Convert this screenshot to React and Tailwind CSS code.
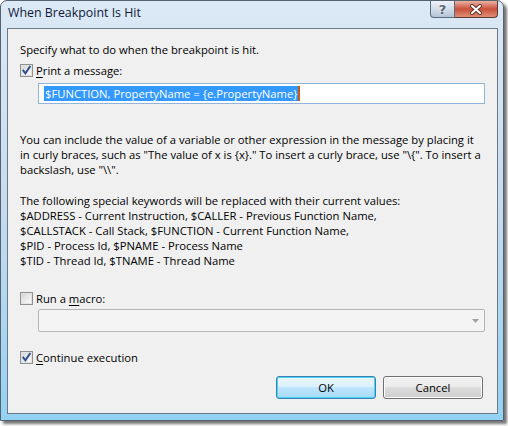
import React from "react";

const font = { fontFamily: '"Open Sans", "Noto Sans", sans-serif' };

function Check({ checked }) {
  return (
    <span className="flex h-[13px] w-[13px] shrink-0 items-center justify-center border border-[#8e8f8f] bg-white">
      <span className="relative flex h-[11px] w-[11px] items-center justify-center border border-[#e2e2e2] bg-gradient-to-br from-[#d8d8d8] to-[#fafafa]">
        {checked && (
          <svg width="9" height="9" viewBox="0 0 9 9" className="overflow-visible">
            <path
              d="M1.3 4.6 L3.4 7.3 L7.8 0.8"
              fill="none"
              stroke="#2c4d8e"
              strokeWidth="1.9"
              strokeLinecap="square"
            />
          </svg>
        )}
      </span>
    </span>
  );
}

function CheckRow({ checked, children }) {
  return (
    <div className="flex h-[15px] items-center gap-[3px]">
      <Check checked={checked} />
      <span className="leading-[15px] text-black">{children}</span>
    </div>
  );
}

export default function App() {
  return (
    <div className="h-[426px] w-[508px] bg-white" style={font}>
      <div className="flex h-[421px] w-[504px] flex-col rounded-t-[7px] border border-[#55626e] bg-gradient-to-b from-[#dce9f6] via-[#c6dbef] to-[#93d2f3] shadow-[3px_3px_3px_rgba(0,0,0,0.55)]">
        {/* title bar */}
        <div className="flex h-[27px] items-start">
          <div className="pl-[7px] pt-[4px] text-[12.4px] leading-[16px] text-[#10193a]">
            When Breakpoint Is Hit
          </div>
          <div className="ml-auto mr-[5px] flex">
            <div className="flex h-[17px] w-[25px] items-center justify-center rounded-bl-[4px] border border-t-0 border-[#5c6c7c] bg-gradient-to-b from-[#edf2f8] via-[#d2dde9] to-[#b3c4d6]">
              <span
                className="text-[13px] font-bold leading-[13px] text-[#5a6672] [text-shadow:0_0_2px_#fff]"
                style={{ fontFamily: '"DejaVu Sans", sans-serif' }}
              >
                ?
              </span>
            </div>
            <div className="flex h-[17px] w-[43px] items-center justify-center rounded-br-[4px] border border-l-0 border-t-0 border-[#5b3a34] bg-gradient-to-b from-[#eab2a4] via-[#c9503c] to-[#dd8e74]">
              <svg width="14" height="11" viewBox="0 0 14 11">
                <path d="M3 2 L11 9 M11 2 L3 9" stroke="#5a2a22" strokeWidth="4" strokeLinecap="round" />
                <path d="M3 2 L11 9 M11 2 L3 9" stroke="#ffffff" strokeWidth="2.2" strokeLinecap="round" />
              </svg>
            </div>
          </div>
        </div>

        {/* client area */}
        <div className="ml-[6px] mr-[5px] flex h-[386px] flex-col border border-[#6c7a87] bg-[#f0f0f0] px-[12px] pt-[12px] text-[11.25px] leading-[15px] text-black">
          <div className="mt-[1px]">Specify what to do when the breakpoint is hit.</div>

          <div className="mt-[6px]">
            <CheckRow checked>
              <span className="underline underline-offset-2">P</span>rint a message:
            </CheckRow>
          </div>

          <div className="ml-[18px] mt-[5px] flex h-[21px] items-center border border-[#8fb5dc] bg-white pl-[5px]">
            <span className="bg-[#3399ff] px-[1px] leading-[15px] whitespace-nowrap text-white">
              $FUNCTION, PropertyName = {"{e.PropertyName}"}
            </span>
            <span className="h-[15px] w-[2px] bg-[#c55a11]" />
          </div>

          <div className="mt-[28px] whitespace-nowrap">
            <div>You can include the value of a variable or other expression in the message by placing it</div>
            <div>
              {'in curly braces, such as "The value of x is {x}." To insert a curly brace, use "\\{". To insert a'}
            </div>
            <div>{'backslash, use "\\\\".'}</div>
          </div>

          <div className="mt-[16px] whitespace-nowrap">
            <div>The following special keywords will be replaced with their current values:</div>
            <div>$ADDRESS - Current Instruction, $CALLER - Previous Function Name,</div>
            <div>$CALLSTACK - Call Stack, $FUNCTION - Current Function Name,</div>
            <div>$PID - Process Id, $PNAME - Process Name</div>
            <div>$TID - Thread Id, $TNAME - Thread Name</div>
          </div>

          <div className="mt-[23px]">
            <CheckRow>
              Run a <span className="underline underline-offset-2">m</span>acro:
            </CheckRow>
          </div>

          <div className="ml-[18px] mt-[3px] flex h-[23px] items-center justify-end rounded-[2px] border border-[#b5b5b5] bg-[#f4f4f4] pr-[5px]">
            <svg width="7" height="4" viewBox="0 0 7 4">
              <path d="M0 0 H7 L3.5 4 Z" fill="#a0a0a0" />
            </svg>
          </div>

          <div className="mt-[18px]">
            <CheckRow checked>
              <span className="underline underline-offset-2">C</span>ontinue execution
            </CheckRow>
          </div>

          <div className="mt-[11px] flex justify-end gap-[7px] pr-[2px]">
            <button className="flex h-[23px] w-[100px] items-center justify-center rounded-[3px] border border-[#3c7fb1] bg-[linear-gradient(#eaf6fd_0%,#d9f0fc_50%,#bee6fd_50%,#a7d9f5_100%)] text-black shadow-[inset_0_0_0_1px_#48d4f4]">
              OK
            </button>
            <button className="flex h-[23px] w-[100px] items-center justify-center rounded-[3px] border border-[#707070] bg-[linear-gradient(#f2f2f2_0%,#ebebeb_50%,#dddddd_50%,#cfcfcf_100%)] text-black shadow-[inset_0_0_0_1px_#fcfcfc]">
              Cancel
            </button>
          </div>
        </div>
      </div>
    </div>
  );
}
